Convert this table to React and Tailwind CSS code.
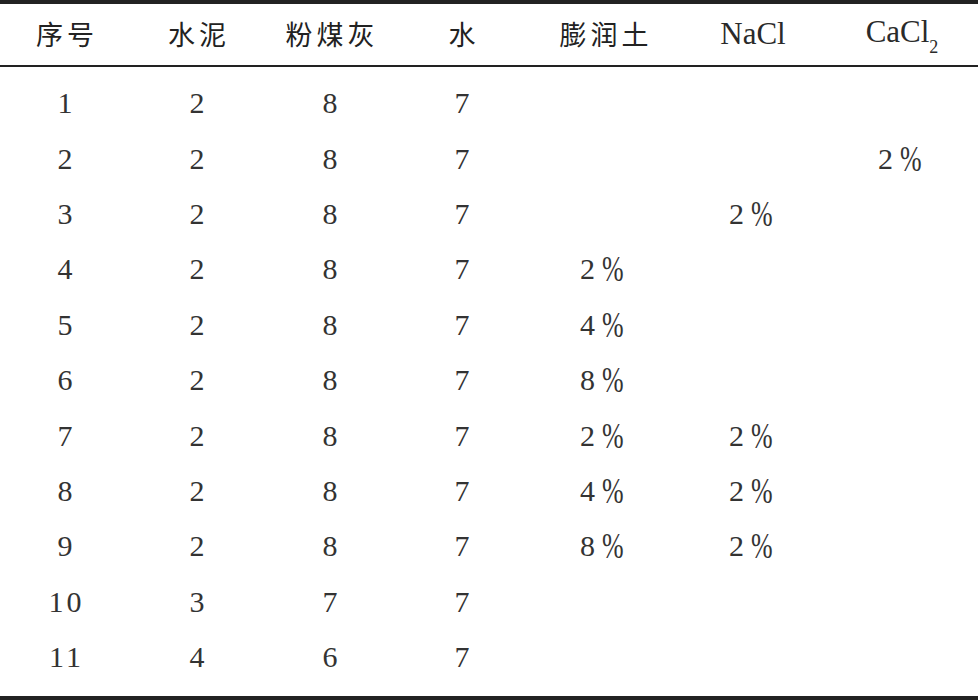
const headers = ['序号', '水泥', '粉煤灰', '水', '膨润土'];

const rows = [
  ['1', '2', '8', '7', '', '', ''],
  ['2', '2', '8', '7', '', '', '2'],
  ['3', '2', '8', '7', '', '2', ''],
  ['4', '2', '8', '7', '2', '', ''],
  ['5', '2', '8', '7', '4', '', ''],
  ['6', '2', '8', '7', '8', '', ''],
  ['7', '2', '8', '7', '2', '2', ''],
  ['8', '2', '8', '7', '4', '2', ''],
  ['9', '2', '8', '7', '8', '2', ''],
  ['10', '3', '7', '7', '', '', ''],
  ['11', '4', '6', '7', '', '', ''],
];

const cols = 'grid grid-cols-[130px_134px_132px_132px_152px_146px_152px]';

function Pct({ v }) {
  if (!v) return null;
  return (
    <span className="inline-flex items-baseline -ml-[4px]">
      <span>{v}</span>
      <span className="ml-[7px] inline-block text-[36px] leading-none scale-x-[0.72] origin-left -mr-[8px] translate-y-[2px]">%</span>
    </span>
  );
}

export default function App() {
  return (
    <div className="w-[978px] h-[700px] bg-white text-[#2a2a2a] font-['Liberation_Serif','Noto_Sans_CJK_SC',serif]">
      <div className="border-t-4 border-b-4 border-[#222] h-[700px] flex flex-col">
        <div className={`${cols} h-[63px] items-center border-b-2 border-[#222] text-center`}>
          {headers.map((h) => (
            <div key={h} className="font-['Noto_Sans_CJK_SC',sans-serif] text-[27px] tracking-[4px] pl-[4px] font-normal text-[#222]">
              {h}
            </div>
          ))}
          <div className="text-[31px]">NaCl</div>
          <div className="text-[31px] -mt-[4px]">
            CaCl<sub className="text-[18px] align-[-6px]">2</sub>
          </div>
        </div>
        <div className="flex flex-col pt-[8px]">
          {rows.map((r) => (
            <div key={r[0]} className={`${cols} h-[55.4px] items-center text-center text-[30px] text-[#333]`}>
              <div className="tracking-[3px] pl-[3px]">{r[0]}</div>
              <div>{r[1]}</div>
              <div>{r[2]}</div>
              <div>{r[3]}</div>
              <div><Pct v={r[4]} /></div>
              <div><Pct v={r[5]} /></div>
              <div><Pct v={r[6]} /></div>
            </div>
          ))}
        </div>
      </div>
    </div>
  );
}
